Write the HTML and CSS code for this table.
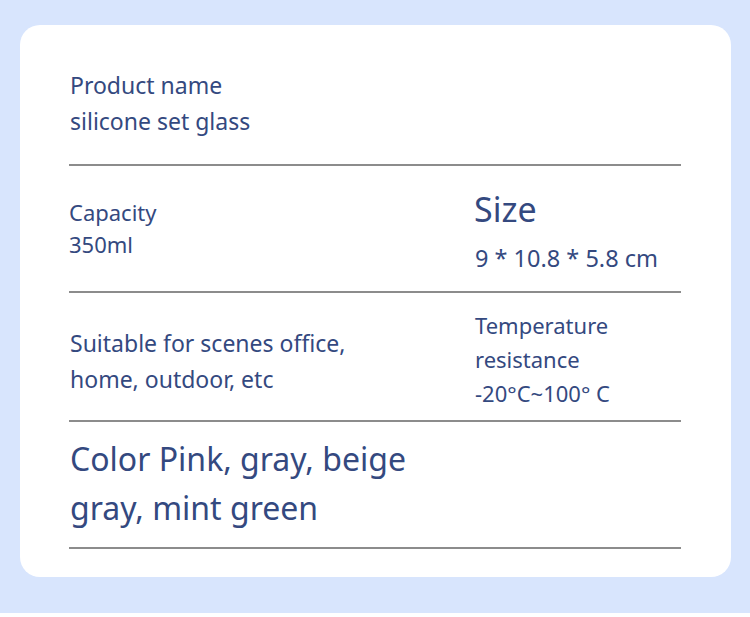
FILE: index.html
```html
<!DOCTYPE html>
<html lang="en">
<head>
<meta charset="utf-8">
<title>Product specs</title>
<link rel="stylesheet" href="styles.css">
</head>
<body>
<div class="page">
  <div class="card">
    <div class="row row-name">
      <div class="cell name">Product name<br>silicone set glass</div>
    </div>
    <div class="row row-cap">
      <div class="cell cap">Capacity<br>350ml</div>
      <div class="cell size">
        <div class="size-title">Size</div>
        <div class="size-val">9 * 10.8 * 5.8 cm</div>
      </div>
    </div>
    <div class="row row-use">
      <div class="cell use">Suitable for scenes office,<br>home, outdoor, etc</div>
      <div class="cell temp">Temperature<br>resistance<br>-20°C~100° C</div>
    </div>
    <div class="row row-color">
      <div class="cell color">Color Pink, gray, beige<br>gray, mint green</div>
    </div>
  </div>
</div>
</body>
</html>
```
FILE: styles.css
```css
html, body {
  margin: 0;
  padding: 0;
  background: #ffffff;
}
body {
  font-family: "Noto Sans", "Open Sans", sans-serif;
  color: #34497f;
}
.page {
  background: #d8e5fd;
  padding: 25px 19px 36px 20px;
  width: 711px;
}
.card {
  background: #ffffff;
  border-radius: 20px;
  padding: 42px 50px 28px 49px;
}
.row {
  display: grid;
  grid-template-columns: 405px 1fr;
  align-items: start;
  border-bottom: 2px solid #8c8c8c;
}
.row-name {
  padding-bottom: 25px;
}
.name {
  font-size: 23px;
  line-height: 36px;
  padding-left: 1px;
}
.row-cap {
  padding-top: 23px;
  padding-bottom: 17px;
}
.cap {
  font-size: 22px;
  line-height: 32px;
  margin-top: 7px;
}
.size-title {
  font-size: 34px;
  line-height: 40px;
}
.size-val {
  font-size: 23.5px;
  line-height: 32px;
  margin-top: 13px;
  padding-left: 1px;
}
.row-use {
  padding-top: 15px;
  padding-bottom: 10px;
}
.use {
  font-size: 23px;
  line-height: 36px;
  margin-top: 17px;
  padding-left: 1px;
}
.temp {
  font-size: 22px;
  line-height: 34px;
  padding-left: 1px;
}
.row-color {
  padding-top: 12px;
  padding-bottom: 15px;
}
.color {
  grid-column: 1 / span 2;
  font-size: 32px;
  line-height: 49px;
  padding-left: 1px;
}
```
